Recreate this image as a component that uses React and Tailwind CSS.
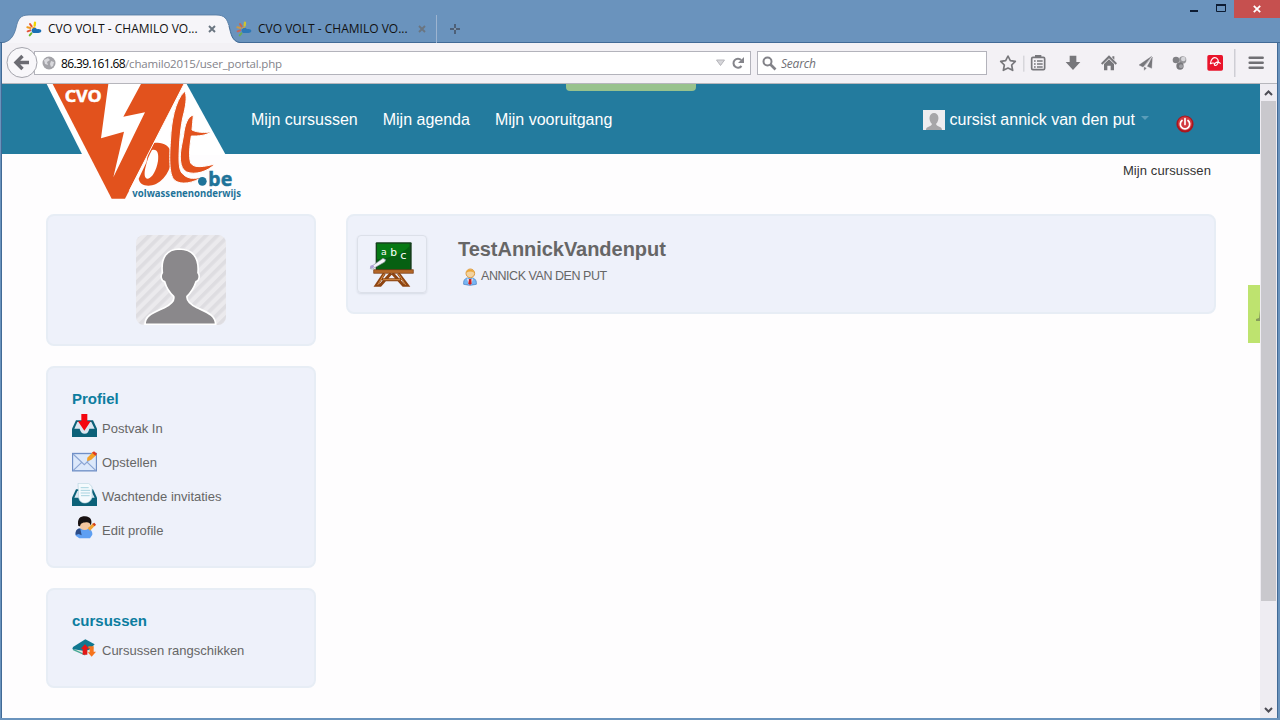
const FONT_UI = "font-['Open_Sans','Noto_Sans',sans-serif]";

function Favicon({ dim }) {
  return (
    <svg width="16" height="16" viewBox="0 0 48 48" className={dim ? "shrink-0 opacity-75" : "shrink-0"}>
      <g strokeWidth="6" strokeLinecap="round" fill="none">
        <path d="M12 9l5 7" stroke="#e8572b" />
        <path d="M27 5l-1 9" stroke="#f0d400" strokeWidth="7" />
        <path d="M4 19l9 2" stroke="#ef9a1c" />
        <path d="M5 31l8-3" stroke="#e4553a" />
        <path d="M11 43l5-6" stroke="#6db52d" />
      </g>
      <path d="M18 24c5-6 13-4 15 1 5-2 13 0 13 5 0 4-5 6-9 6H23c-5 0-8-6-5-12z" fill="#1a6fb5" />
      <path d="M17 24c1-7 9-9 12-4-4 0-8 1-12 4z" fill="#f4a51c" />
    </svg>
  );
}

function TabClose() {
  return (
    <svg width="8" height="8" viewBox="0 0 8 8" className="shrink-0">
      <path d="M1 1l6 6M7 1L1 7" stroke="#6a7581" strokeWidth="1.9" />
    </svg>
  );
}

function TitleBar() {
  return (
    <div className="relative flex h-[43px] shrink-0 border-b border-[#416a96]">
      <svg width="232" height="29" viewBox="0 0 232 29" className="absolute left-0 top-[14px]">
        <path d="M2 29C10 28 14 22 16 14C18 5 20 1 29 1H216C225 1 227 5 229 12C231 20 231 25 232 29Z" fill="#f6f5f9" />
        <path d="M2 28.5C10 28 14 22 16 14C18 5 20 1 29 1H216C225 1 227 5 229 12" fill="none" stroke="#50779f" strokeWidth=".8" />
      </svg>
      <div className="relative mt-[15px] flex h-7 w-[216px] items-center pl-[26px]">
        <Favicon />
        <span className="ml-[6px] w-[160px] whitespace-nowrap text-xs tracking-[0.01px] text-[#111]">CVO VOLT - CHAMILO VO...</span>
        <TabClose />
      </div>
      <svg width="24" height="29" viewBox="0 0 24 29" className="absolute left-[220px] top-[14px]">
        <path d="M0 5L9 12C11 20 12 28 20 29H0Z" fill="#f6f5f9" />
        <path d="M9 12C11 20 12 27.500 20 28.500" fill="none" stroke="#416a96" />
      </svg>
      <div className="relative mt-[15px] flex h-7 w-[221px] items-center border-r border-[#9db4d0] pl-5">
        <Favicon dim />
        <span className="ml-[6px] w-[160px] whitespace-nowrap text-xs tracking-[0.01px] text-[#111]">CVO VOLT - CHAMILO VO...</span>
        <TabClose />
      </div>
      <svg width="12" height="12" viewBox="0 0 12 12" className="ml-3 mt-[23px]">
        <path d="M6 1v10M1 6h10" stroke="#4d6078" strokeWidth="2" />
        <path d="M5 5h2v2H5z" fill="#8195ab" />
      </svg>
      <div className="ml-auto flex">
        <svg width="44" height="18" viewBox="0 0 44 18">
          <rect x="0" y="10" width="8" height="2" fill="#0d1c33" />
          <path d="M26.5 5.5h9v6h-9z" fill="none" stroke="#0d1c33" />
          <rect x="26" y="4" width="10" height="2" fill="#0d1c33" />
        </svg>
        <div className="flex h-[18px] w-[46px] items-center justify-center bg-[#c6504f]">
          <svg width="8" height="8" viewBox="0 0 8 8"><path d="M.8.8l6.4 6.4M7.2.8L.8 7.2" stroke="#fff" strokeWidth="1.8" /></svg>
        </div>
      </div>
    </div>
  );
}

function ToolIcons() {
  return (
    <svg width="290" height="40" viewBox="0 0 870 120" className="shrink-0">
      <path d="M63 39l7 14 15 2-11 11 3 16-14-7-14 7 3-16-11-11 15-2z" fill="none" stroke="#77777b" strokeWidth="5" strokeLinejoin="round" />
      <path d="M110.500 38v48" stroke="#c9c9ce" strokeWidth="3" />
      <rect x="134" y="43" width="39" height="37" rx="4" fill="none" stroke="#77777b" strokeWidth="5" />
      <path d="M144 36h19v9h-19z" fill="#77777b" />
      <path d="M141 54h5m4 0h17M141 63h5m4 0h17M141 72h5m4 0h17" stroke="#77777b" strokeWidth="4.500" />
      <path d="M248 38h20v19h12l-22 24-22-24h12z" fill="#77777b" />
      <path d="M366 37l24 24-4 4-20-19-20 19-4-4z M351 63l15-14 15 14v19h-10V68h-10v14h-10z M376 40h6v10l-6-6z" fill="#77777b" />
      <path d="M494 40l-38 26 12 6zM496 42l-2 34-13-6zM471 73l7 2-6 7zM492 46l-21 25" fill="#77777b" stroke="#77777b" strokeWidth="1" />
      <circle cx="567" cy="51" r="10" fill="#808084" />
      <circle cx="587" cy="51" r="11" fill="#96969a" /><circle cx="589" cy="48" r="7" fill="#d6d6da" />
      <circle cx="579" cy="69" r="11" fill="#77777b" /><circle cx="582" cy="70" r="6" fill="#a0a0a5" />
      <rect x="661" y="36" width="47" height="47" rx="5" fill="#e9142b" />
      <path d="M670 63c1-16 11-22 18-18s8 14 2 20c-5 5-11 1-6-4 6-6 13-3 17 1M670 63c4-3 8-4 12-2" fill="none" stroke="#fff" strokeWidth="3.500" />
      <path d="M743.500 18v84" stroke="#bdbdc4" strokeWidth="3" />
      <path d="M788 44h39M788 59h39M788 74h39" stroke="#707074" strokeWidth="7.500" strokeLinecap="round" />
    </svg>
  );
}

function NavBar() {
  return (
    <div className="flex h-[41px] shrink-0 items-center border-b border-[#b6b6bc] bg-[#f3f1f5]">
      <div className="relative flex h-[34px] w-8 items-center">
        <svg width="33" height="33" viewBox="0 0 33 33" className="absolute left-[4px] top-0 z-10">
          <circle cx="16" cy="16.500" r="15" fill="#f8f7fa" stroke="#a5a5ad" />
          <path d="M23 16.500H11M16.500 10l-6.500 6.500 6.500 6.500" fill="none" stroke="#6c6c73" strokeWidth="3.400" />
        </svg>
      </div>
      <div className="flex h-6 w-[717px] items-center border border-[#b3b3bb] bg-white pl-[7px]">
        <svg width="14" height="14" viewBox="0 0 14 14" className="shrink-0">
          <circle cx="7" cy="7" r="6.500" fill="#a3a3a8" />
          <path d="M2 4l4-2 2 2-3 2 1 3-3-1zM9 5l3 1-1 4-2 1-1-3z" fill="#dadade" />
        </svg>
        <span className="ml-[5px] mt-px whitespace-nowrap text-xs text-[#83838a]"><span className="tracking-[-0.6px] text-black">86.39.161.68</span><span className="text-[11.5px] tracking-[-0.18px]">/chamilo2015/user_portal.php</span></span>
        <svg width="30" height="14" viewBox="0 0 30 14" className="ml-auto mr-[4px]">
          <path d="M.5 4h8L4.500 9.500z" fill="#d6d6da" stroke="#b5b5ba" />
          <path d="M25.500 10a4.500 4.500 0 1 1-.3-6" fill="none" stroke="#85858b" strokeWidth="2" />
          <path d="M28 1v6h-6z" fill="#85858b" />
        </svg>
      </div>
      <div className="ml-[6px] flex h-6 w-[230px] items-center border border-[#b3b3bb] bg-white pl-1">
        <svg width="15" height="15" viewBox="0 0 15 15"><circle cx="5.500" cy="5.500" r="4" fill="none" stroke="#828288" strokeWidth="2" /><path d="M8.500 8.500l5 5" stroke="#828288" strokeWidth="2.600" /></svg>
        <span className="ml-1 mt-px text-xs italic tracking-[-0.2px] text-[#6f6f75]">Search</span>
      </div>
      <ToolIcons />
    </div>
  );
}

function Logo() {
  return (
    <svg width="200" height="118" viewBox="48 12 600 354" className="absolute left-11 top-0 z-10 overflow-visible">
      <path d="M50 12H470L587 224H157Z" fill="#fff" />
      <path d="M357 194C385 181 417 190 424 218C430 250 412 295 378 312C352 323 329 315 326 296L350 245Z" fill="#e2521d" />
      <path d="M366 210C382 206 387 220 384 243C379 272 367 293 354 296C343 297 342 281 346 264C351 241 357 226 366 210Z" fill="#fff" />
      <path d="M68 12H462L285 356H245Z" fill="#e2521d" />
      <path d="M462 12L298 332" stroke="#fff" strokeWidth="3" />
      <path d="M235 12H333L280 110L345 97L250 292L282 155L213 175Z" fill="#fff" />
      <path d="M464 34C471 44 469 70 462 98C451 138 448 190 447 230C447 258 449 276 461 284C475 298 497 297 517 290C493 309 451 317 433 300C416 283 418 226 422 174C424 130 434 62 464 34Z" fill="#e2521d" stroke="#fff" strokeWidth="3" />
      <path d="M490 105C489 119 487 137 486 150C502 158 521 158 544 156C529 166 505 169 484 168C479 199 476 229 482 249C493 266 522 260 555 252C533 275 495 286 470 276C447 265 449 224 455 196L461 164C464 136 472 110 490 105Z" fill="#e2521d" stroke="#fff" strokeWidth="3" />
      <circle cx="517" cy="304" r="13" fill="#1f7399" />
      <text x="535" y="319" textLength="72" lengthAdjust="spacingAndGlyphs" fontFamily="Noto Sans, sans-serif" fontWeight="700" fontSize="60" fill="#1f7399" stroke="#1f7399" strokeWidth="1.5">be</text>
      <text x="307" y="351" textLength="326" lengthAdjust="spacingAndGlyphs" fontFamily="Noto Sans, sans-serif" fontWeight="700" fontSize="30" fill="#1f7399">volwassenenonderwijs</text>
      <text x="104" y="66" textLength="111" lengthAdjust="spacingAndGlyphs" fontFamily="Noto Sans, sans-serif" fontWeight="700" fontSize="50" fill="#fff" stroke="#fff" strokeWidth="1.5">CVO</text>
    </svg>
  );
}

const BUST = "M27 268C27 240 55 232 85 218C105 208 117 198 113 184C100 172 91 158 86 140C76 139 72 122 79 113C74 68 92 43 130 42C168 43 190 65 186 113C193 122 189 139 180 140C174 158 165 172 153 184C151 198 163 208 183 218C213 232 238 240 239 268Z";

function Avatar() {
  return (
    <svg width="90" height="90" viewBox="0 0 270 270">
      <defs>
        <pattern id="stripes" width="24" height="24" patternUnits="userSpaceOnUse" patternTransform="rotate(45)">
          <rect width="24" height="24" fill="#ebeaed" /><rect width="11" height="24" fill="#dedde1" />
        </pattern>
        <clipPath id="round"><rect width="270" height="270" rx="24" /></clipPath>
      </defs>
      <g clipPath="url(#round)">
        <rect width="270" height="270" fill="url(#stripes)" />
        <path d={BUST} fill="#8a888b" stroke="#fff" strokeWidth="5" />
      </g>
    </svg>
  );
}

function Header() {
  return (
    <header className="relative flex h-[70px] shrink-0 items-start bg-[#237b9e] font-['Liberation_Sans',sans-serif] text-base text-white">
      <Logo />
      <div className="absolute left-[564px] top-0 h-[7px] w-[130px] rounded-b-[4px] bg-[#98c28d]" />
      <nav className="ml-[249px] mt-6 flex gap-[25px] whitespace-nowrap">
        <span>Mijn cursussen</span>
        <span>Mijn agenda</span>
        <span>Mijn vooruitgang</span>
      </nav>
      <div className="ml-auto mr-[66px] mt-6 flex whitespace-nowrap">
        <svg width="22" height="20" viewBox="0 0 22 20" className="mt-[2px]">
          <rect width="22" height="20" fill="#eeedef" />
          <path d="M3 20c0-4 5-3 6-6-4-4-3-11 2-11s6 7 2 11c1 3 6 2 6 6z" fill="#a7a6a8" />
        </svg>
        <span className="ml-1 tracking-[0.02px]">cursist annick van den put</span>
        <svg width="8" height="4" viewBox="0 0 8 4" className="ml-[6px] mt-2"><path d="M0 0h8L4 4z" fill="#5a9db9" /></svg>
        <svg width="18" height="18" viewBox="0 0 18 18" className="ml-[27px] mt-[7px]">
          <circle cx="9" cy="9" r="8.600" fill="#a9161e" />
          <circle cx="9" cy="8.500" r="7" fill="#d23a40" />
          <path d="M6 5.500a4.700 4.700 0 1 0 6 0M9 3.500v6" fill="none" stroke="#fff" strokeWidth="1.700" strokeLinecap="round" />
        </svg>
      </div>
    </header>
  );
}

function Tray() {
  return (
    <>
      <path d="M12 19H63L75 44V69H0V44Z" fill="#0c6178" />
      <path d="M16 24H58L68 44H52C50 53 46 59 38 59S25 53 23 44H7Z" fill="#dbe6f0" />
    </>
  );
}

function InboxIcon() {
  return (
    <svg width="25" height="24" viewBox="0 0 75 72" className="-mt-[3px]"><Tray /><path d="M28 0H46V22H56L37 50L18 22H28Z" fill="#f4060f" /></svg>
  );
}

function ComposeIcon() {
  return (
    <svg width="25" height="21" viewBox="0 0 75 63">
      <rect x="1.500" y="7.500" width="72" height="52" fill="#dce8fa" stroke="#6f8fc6" strokeWidth="4" />
      <path d="M3 9l34 32L70 9M4 58l25-24M71 58L46 34" fill="none" stroke="#8ba5d3" strokeWidth="3.500" />
      <path d="M46 20L63 3L74 11L57 27L45 30Z" fill="#f2a027" /><path d="M60 5l6-4 9 7-5 6z" fill="#e03a20" />
    </svg>
  );
}

function InviteIcon() {
  return (
    <svg width="25" height="24" viewBox="0 0 75 72">
      <Tray />
      <path d="M18 1H50L60 11V44C55 56 46 60 38 60S22 55 20 44Z" fill="#f4fafd" stroke="#b3d1de" strokeWidth="2" />
      <path d="M26 14h24M26 22h28M26 30h28M27 38h26" stroke="#a8d3df" strokeWidth="3" />
    </svg>
  );
}

function ProfileIcon() {
  return (
    <svg width="25" height="24" viewBox="0 0 75 72" className="-mt-[2px]">
      <path d="M11 59C9 42 18 36 35 36S62 42 61 56L54 67H22Z" fill="#5e9ff2" />
      <path d="M11 57C9 42 18 36 25 38L29 58L20 54Z" fill="#2c4c86" />
      <circle cx="38" cy="26" r="16" fill="#f5c8a0" />
      <path d="M19 30C15 8 24 1 39 1C57 2 62 15 56 29C55 20 48 18 42 19C33 20 26 21 24 31Z" fill="#171111" />
      <path d="M47 37L63 22L70 28L54 44Z" fill="#f0a232" /><path d="M61 24l6-4 5 6-4 5z" fill="#d43e1c" />
    </svg>
  );
}

function CourseIcon() {
  return (
    <svg width="25" height="20" viewBox="0 0 75 60">
      <path d="M3 31L43 37L66 17V29L38 48L6 36Z" fill="#dce9dc" />
      <path d="M3 31L40 48" stroke="#43a799" strokeWidth="4" />
      <path d="M3 24L40 1L68 16L52 32L37 36L1 30Z" fill="#10778f" />
      <path d="M39 16L52 29H46V47H32V29H26Z" fill="#e31616" />
      <path d="M49 22H65V38H72L59 53L47 40H53V28H49Z" fill="#f6741d" />
    </svg>
  );
}

function Card({ className, children }) {
  return <section className={"rounded-lg border-2 border-[#e7edf5] bg-[#eef1fa] " + className}>{children}</section>;
}

function MenuCard({ title, items, className }) {
  return (
    <Card className={"px-6 pt-[21px] " + className}>
      <h4 className="h-[21px] text-[15px] leading-[19px] font-bold text-[#0c7d9f]">{title}</h4>
      <ul>
        {items.map(([Icon, label]) => (
          <li key={label} className="flex h-[34px] items-center gap-[5px] text-[13px] text-[#666]">
            <Icon />
            <span className="whitespace-nowrap pt-[3px]">{label}</span>
          </li>
        ))}
      </ul>
    </Card>
  );
}

function BoardIcon() {
  return (
    <svg width="46" height="46" viewBox="0 0 138 138">
      <path d="M46 97L22 133H34L66 97M88 97L115 133H103L70 97M40 116H96" fill="none" stroke="#8e4512" strokeWidth="9" />
      <path d="M46 98L26 132M88 98L110 132M42 116H94" fill="none" stroke="#d38a45" strokeWidth="3" />
      <rect x="20" y="4" width="108" height="84" rx="3" fill="#153f1c" />
      <rect x="24" y="8" width="98" height="76" fill="#067914" />
      <path d="M24 84V55C70 50 101 38 122 15V84Z" fill="#066012" />
      <path d="M14 86H133V97H14Z" fill="#b46728" stroke="#743a10" strokeWidth="2" />
      <g fill="#fff" fontFamily="DejaVu Sans, sans-serif" fontSize="28"><text x="36" y="42">a</text><text x="64" y="46" fontSize="32">b</text><text x="94" y="53" fontSize="34">c</text></g>
      <path d="M5 78L42 52L50 56L47 63L10 84L4 83Z" fill="#f5f5fa" stroke="#87919d" strokeWidth="2" />
      <path d="M3 75l9-4 4 7-9 5z" fill="#af9fd6" />
    </svg>
  );
}

function TeacherIcon() {
  return (
    <svg width="14" height="18" viewBox="0 0 42 54">
      <path d="M2 49C0 32 11 29 21 29S42 33 40 49Q20 55 2 49Z" fill="#77b5f3" stroke="#3e7ac0" strokeWidth="2" />
      <path d="M12 31L21 37L30 31L25 49H17Z" fill="#f4f7fc" />
      <path d="M18 33h7l1 13-5 6-5-6z" fill="#c92125" />
      <circle cx="22" cy="16" r="13" fill="#f3d3a0" stroke="#dc9c43" strokeWidth="3" />
      <path d="M10 14C12 1 31 1 34 14C27 10 18 9 10 14Z" fill="#eca638" />
    </svg>
  );
}

function Portal() {
  return (
    <main className="flex min-w-0 grow flex-col bg-[#fefdfe] font-['Liberation_Sans',sans-serif]">
      <Header />
      <div className="flex h-[60px] justify-end pr-[49px] pt-2 text-[13px] leading-[18px] tracking-[0.1px] text-[#333]">Mijn cursussen</div>
      <div className="relative flex items-start gap-[30px] pl-11">
        <aside className="flex w-[270px] flex-col gap-5">
          <Card className="flex h-[132px] justify-center pt-[19px]"><Avatar /></Card>
          <MenuCard
            className="h-[202px]"
            title="Profiel"
            items={[[InboxIcon, "Postvak In"], [ComposeIcon, "Opstellen"], [InviteIcon, "Wachtende invitaties"], [ProfileIcon, "Edit profile"]]}
          />
          <MenuCard className="h-[100px]" title="cursussen" items={[[CourseIcon, "Cursussen rangschikken"]]} />
        </aside>
        <Card className="flex h-[100px] w-[870px] items-start pl-[9px] pt-[19px]">
          <div className="flex h-[58px] w-[70px] items-center justify-center rounded-[4px] border border-[#dce0e9] shadow-[0_1px_2px_#d6dbe5]"><BoardIcon /></div>
          <div className="ml-[31px]">
            <h3 className="h-6 whitespace-nowrap text-[20px] leading-[28px] font-bold tracking-[-0.04px] text-[#666]">TestAnnickVandenput</h3>
            <div className="mt-[9px] flex items-center gap-1 pl-[5px] text-[12.5px] leading-[18px] text-[#666]">
              <TeacherIcon />
              <span className="-mt-[2px] whitespace-nowrap tracking-[-0.45px]">ANNICK VAN DEN PUT</span>
            </div>
          </div>
        </Card>
        <div className="absolute right-0 top-[71px] h-[58px] w-3 bg-[#bee36f]">
          <svg width="4" height="14" viewBox="0 0 4 14" className="absolute right-0 top-6"><path d="M4 1v11H0v-2l3-1z" fill="#869c5c" /></svg>
        </div>
      </div>
    </main>
  );
}

function Scrollbar() {
  return (
    <div className="flex w-[17px] shrink-0 flex-col items-center bg-[#eeecf2]">
      <div className="flex h-[17px] shrink-0 items-center"><svg width="9" height="8" viewBox="0 0 9 8"><path d="M1 6l3.500-3.500L8 6" fill="none" stroke="#4c4c55" strokeWidth="2" /></svg></div>
      <div className="h-[500px] w-[15px] shrink-0 bg-[#c9c8cd]" />
      <div className="mt-auto flex h-[17px] shrink-0 items-center"><svg width="9" height="8" viewBox="0 0 9 8"><path d="M1 2l3.500 3.500L8 2" fill="none" stroke="#4c4c55" strokeWidth="2" /></svg></div>
    </div>
  );
}

export default function App() {
  return (
    <div className={"flex h-[720px] w-[1280px] flex-col overflow-hidden bg-[#6a93bd] " + FONT_UI}>
      <TitleBar />
      <div className="mb-[2px] ml-px mr-[2px] flex min-h-0 grow flex-col border-x border-[#416a96]">
        <NavBar />
        <div className="flex min-h-0 grow">
          <Portal />
          <Scrollbar />
        </div>
      </div>
    </div>
  );
}
